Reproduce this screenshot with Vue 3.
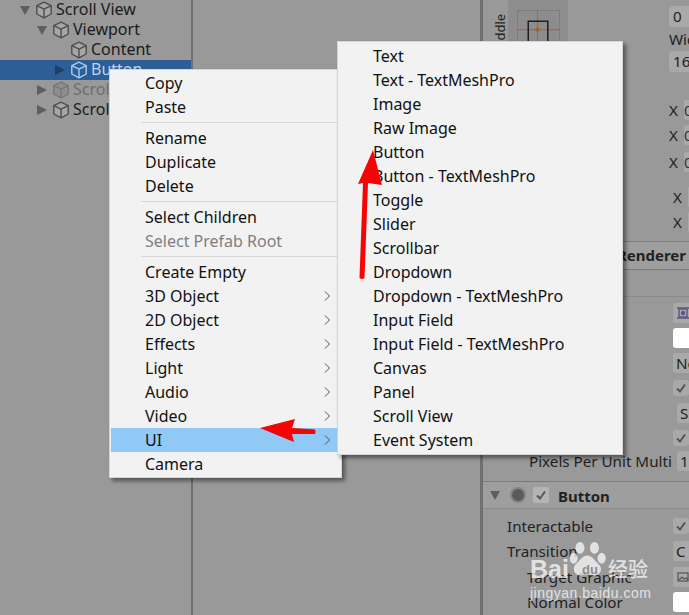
<script setup>
const tree = [
  { name: 'Scroll View', indent: 20, fold: 'open' },
  { name: 'Viewport', indent: 37, fold: 'open' },
  { name: 'Content', indent: 55, fold: '' },
  { name: 'Button', indent: 55, fold: 'closed', selected: true },
  { name: 'Scroll', indent: 37, fold: 'closed', dim: true },
  { name: 'Scroll', indent: 37, fold: 'closed' },
]
const mainMenu = [
  [{ t: 'Copy' }, { t: 'Paste' }],
  [{ t: 'Rename' }, { t: 'Duplicate' }, { t: 'Delete' }],
  [{ t: 'Select Children' }, { t: 'Select Prefab Root', off: true }],
  [
    { t: 'Create Empty' }, { t: '3D Object', sub: true }, { t: '2D Object', sub: true },
    { t: 'Effects', sub: true }, { t: 'Light', sub: true }, { t: 'Audio', sub: true },
    { t: 'Video', sub: true }, { t: 'UI', sub: true, on: true }, { t: 'Camera' },
  ],
]
const uiMenu = ['Text', 'Text - TextMeshPro', 'Image', 'Raw Image', 'Button', 'Button - TextMeshPro', 'Toggle', 'Slider', 'Scrollbar', 'Dropdown', 'Dropdown - TextMeshPro', 'Input Field', 'Input Field - TextMeshPro', 'Canvas', 'Panel', 'Scroll View', 'Event System']
</script>

<template>
  <div class="screen">
    <aside class="hierarchy">
      <div v-for="(n, i) in tree" :key="i" class="node" :class="{ selected: n.selected, dim: n.dim }" :style="{ paddingLeft: n.indent + 'px' }">
        <span class="fold" :class="n.fold"></span>
        <svg class="cube" viewBox="0 0 18 18" stroke-width="1.4" stroke-linejoin="round">
          <path class="face" d="M9 1.2 16.2 4.6V13L9 16.8 1.800 13V4.600Z" />
          <path fill="none" d="M1.800 4.600 9 8.200 16.200 4.600M9 8.200V16.800" />
        </svg>
        <span class="label">{{ n.name }}</span>
      </div>
    </aside>
    <main class="scene"></main>
    <section class="inspector">
      <div class="anchor-row">
        <div class="anchor-box">
          <span class="anchor-label">middle</span>
          <svg class="anchor" viewBox="0 0 44 44" fill="none">
            <rect x="0.500" y="0.500" width="43" height="43" stroke="#7d7d7d" />
            <path d="M0 20H44M21 0V44" stroke="#b5614f" stroke-width="1.200" />
            <rect x="11.500" y="11.500" width="20" height="30" stroke="#1c1c1c" stroke-width="1.500" />
            <circle cx="21" cy="20" r="2.200" fill="#a5602c" />
          </svg>
        </div>
        <div class="pos-col">
          <div class="field">0</div>
          <div class="cap">Wid</div>
          <div class="field">16</div>
        </div>
      </div>
      <div class="xs">
        <div class="x-row"><span>X</span><i class="stub">0</i></div>
        <div class="x-row"><span>X</span><i class="stub">0</i></div>
        <div class="x-row x3"><span>X</span><i class="stub">0</i></div>
      </div>
      <div class="xs second">
        <div class="x-row"><span>X</span><i class="stub"></i></div>
        <div class="x-row"><span>X</span><i class="stub"></i></div>
      </div>
      <div class="comp-head"><b>Renderer</b></div>
      <div class="blank-row"></div>
      <div class="stack">
        <div class="ctl square h20">
          <svg viewBox="0 0 14 14" fill="none" stroke="#5d5480" stroke-width="1.400"><rect x="3" y="3" width="8" height="8" /><path d="M1 2H13M1 12H13" /><circle cx="7" cy="7" r="1.500" fill="#5d5480" /></svg>
        </div>
        <div class="ctl white h20 m5"></div>
        <div class="ctl h20 txt m5">Ne</div>
        <div class="check m7">
          <svg viewBox="0 0 16 16" fill="none" stroke="#555" stroke-width="2"><path d="M4 8.500 7 11.500 12 4.500" /></svg>
        </div>
        <div class="ctl h20 txt inset m7">S</div>
        <div class="check m7">
          <svg viewBox="0 0 16 16" fill="none" stroke="#555" stroke-width="2"><path d="M4 8.500 7 11.500 12 4.500" /></svg>
        </div>
      </div>
      <div class="prop ppu"><span>Pixels Per Unit Multi</span><div class="ctl h20 txt num">1</div></div>
      <div class="btn-head">
        <span class="fold open"></span>
        <span class="dot"></span>
        <span class="head-check">
          <svg viewBox="0 0 16 16" fill="none" stroke="#555" stroke-width="2"><path d="M4 8.500 7 11.500 12 4.500" /></svg>
        </span>
        <b>Button</b>
      </div>
      <div class="prop p1"><span>Interactable</span>
        <div class="check"><svg viewBox="0 0 16 16" fill="none" stroke="#555" stroke-width="2"><path d="M4 8.500 7 11.500 12 4.500" /></svg></div>
      </div>
      <div class="prop"><span>Transition</span><div class="ctl h20 txt">C</div></div>
      <div class="prop sub target"><span>Target Graphic</span>
        <div class="ctl square h20">
          <svg viewBox="0 0 14 14" fill="none" stroke="#555" stroke-width="1.200"><rect x="2" y="3" width="10" height="8" /><path d="M3 10 6 7l2 2 2-1 2 2" /></svg>
        </div>
      </div>
      <div class="prop sub"><span>Normal Color</span><div class="ctl white h20"></div></div>
    </section>

    <div class="menu main-menu">
      <div v-for="(g, gi) in mainMenu" :key="gi" class="group">
        <div v-for="it in g" :key="it.t" class="item" :class="{ off: it.off, on: it.on }">
          <span>{{ it.t }}</span>
          <svg v-if="it.sub" class="chev" viewBox="0 0 6 10" fill="none" stroke="#555" stroke-width="1"><path d="M1 .5 5.500 5 1 9.500" /></svg>
        </div>
      </div>
    </div>
    <div class="menu ui-menu">
      <div v-for="t in uiMenu" :key="t" class="item"><span>{{ t }}</span></div>
    </div>

    <svg class="arrows" viewBox="0 0 689 615">
      <path fill="#f40404" d="M373 150 382 185 368 183 364.500 278Q362 280 359.500 278L363 183 358 184Z" />
      <path fill="#f40404" d="M260 428 295 419 292 428 315 429.500Q316 432 315 434L292 434 294 442Z" />
    </svg>

    <div class="watermark">
      <svg class="paw" viewBox="0 0 42 42" fill="#fff">
        <ellipse cx="11" cy="6.500" rx="5" ry="6.500" />
        <ellipse cx="27" cy="6.500" rx="5" ry="6.500" />
        <ellipse cx="4" cy="18" rx="4.500" ry="6" />
        <ellipse cx="35" cy="18" rx="4.500" ry="6" />
        <path d="M19 15c6 0 8 6 13 10 5 5 1 13-6 12-3-1-5-1-7-1s-5 1-8 1c-6 0-9-7-5-12 5-4 7-10 13-10Z" />
      </svg>
      <span class="bai">Bai</span><span class="du">du</span><span class="jy">经验</span>
      <span class="url">jingyan.baidu.com</span>
    </div>
  </div>
</template>

<style scoped>
.screen {
  position: relative;
  display: flex;
  width: 689px;
  height: 615px;
  overflow: hidden;
  background: #999;
  color: #1b1b1b;
  font-family: "Noto Sans", "Open Sans", sans-serif;
}
.hierarchy {
  width: 191px;
  flex: none;
  border-right: 2px solid #6f6f6f;
}
.node {
  display: flex;
  align-items: center;
  height: 20px;
  font-size: 16px;
  line-height: 20px;
  color: #1b1b1b;
  stroke: #4d4d4d;
}
.node .label { position: relative; top: -1px; stroke: none; }
.node.selected { background: #2d5e96; color: #b9d4ee; stroke: #a9cdee; }
.node.dim { color: #6e6e6e; stroke: #777; }
.fold { width: 15px; height: 0; flex: none; }
.fold.open { width: 0; margin-right: 5px; border-left: 5px solid transparent; border-right: 5px solid transparent; border-top: 9px solid #5e5e5e; }
.fold.closed { width: 0; margin-right: 5px; border-top: 5px solid transparent; border-bottom: 5px solid transparent; border-left: 10px solid #5e5e5e; }
.selected .fold.closed { border-left-color: #1f3e64; }
.cube { width: 18px; height: 18px; margin-right: 3px; flex: none; }
.face { fill: #a6a6a6; }
.selected .face { fill: #2d5e96; }
.dim .face { fill: #8f8f8f; }
.scene { flex: 1; }
.inspector {
  width: 209px;
  flex: none;
  box-sizing: border-box;
  border-left: 3px solid #707070;
  font-size: 15.200px;
  color: #222;
  display: flex;
  flex-direction: column;
}
.anchor-row { display: flex; height: 97px; padding-left: 25px; justify-content: space-between; }
.anchor-box { position: relative; width: 60px; height: 60px; background: #8d8d8d; flex: none; }
.anchor-label { position: absolute; right: 47px; top: 27px; font-size: 13px; line-height: 16px; transform: rotate(-90deg); }
.anchor { position: absolute; left: 9px; top: 10px; width: 43px; height: 43px; }
.pos-col { padding-top: 6px; width: 20px; flex: none; }
.field { height: 21px; line-height: 21px; padding-left: 4px; background: #a9a9a9; border-radius: 3px 0 0 3px; font-size: 15.200px; }
.cap { height: 24px; line-height: 24px; white-space: nowrap; overflow: hidden; }
.xs { padding-left: 186px; }
.xs.second { padding-left: 190px; margin-top: 10px; }
.x-row { display: flex; align-items: center; height: 25px; gap: 5px; }
.x-row span { width: 10px; flex: none; }
.x3 { margin-top: 2px; }
.stub { width: 5px; height: 20px; font-style: normal; background: #a9a9a9; border-radius: 3px 0 0 3px; line-height: 20px; color: #333; overflow: hidden; }
.comp-head { display: flex; justify-content: flex-end; height: 27px; margin-top: 7px; padding-right: 3px; border-top: 1px solid #7a7a7a; border-bottom: 1px solid #7a7a7a; background: #9e9e9e; font-size: 15px; line-height: 27px; }
.blank-row { height: 26px; border-bottom: 1px solid #8a8a8a; }
.stack { padding-left: 190px; padding-top: 6px; display: flex; flex-direction: column; align-items: flex-start; }
.ctl { flex: none; width: 16px; background: #a9a9a9; border-radius: 3px 0 0 3px; box-sizing: border-box; }
.square { display: flex; align-items: center; padding-left: 3px; overflow: hidden; }
.square svg { width: 14px; height: 14px; flex: none; }
.h20 { height: 20px; }
.m5 { margin-top: 5px; }
.m7 { margin-top: 7px; }
.white { background: #fff; }
.txt { line-height: 20px; padding-left: 3px; overflow: hidden; white-space: nowrap; }
.inset { margin-left: 4px; }
.check { width: 16px; height: 16px; flex: none; background: #a9a9a9; border-radius: 3px; }
.check svg, .head-check svg { display: block; width: 16px; height: 16px; }
.prop { display: grid; grid-template-columns: 166px 20px; align-items: center; height: 25px; padding-left: 24px; white-space: nowrap; }
.prop.ppu { grid-template-columns: 148px 12px; padding-left: 46px; margin-top: 5px; height: 20px; }
.btn-head { display: flex; align-items: center; height: 26px; margin-top: 10px; border-top: 1px solid #7a7a7a; border-bottom: 1px solid #8a8a8a; background: #9e9e9e; padding-left: 7px; }
.dot { width: 12px; height: 12px; border-radius: 50%; background: #5a5a5a; box-shadow: 0 0 0 2px #858585; margin: 0 9px 0 7px; flex: none; }
.head-check { width: 16px; height: 16px; background: #b4b4b4; border-radius: 2px; flex: none; }
.btn-head b { margin-left: 9px; font-size: 15px; position: relative; top: 1px; }
.p1 { margin-top: 4px; }
.prop.sub { padding-left: 44px; grid-template-columns: 146px 20px; }
.prop.target { margin-top: 1px; }
.menu {
  position: absolute;
  background: #f2f2f2;
  border: 1px solid #d5d5d5;
  box-sizing: border-box;
  box-shadow: 3px 3px 4px rgba(0, 0, 0, 0.45);
  font-size: 16px;
  color: #111;
}
.main-menu { left: 109px; top: 69px; width: 233px; height: 409px; padding: 1px 1px 0; }
.ui-menu { left: 337px; top: 41px; width: 286px; height: 414px; padding: 2px 1px 0; }
.group + .group { margin-top: 3px; padding-top: 4px; position: relative; }
.group + .group::before { content: ""; position: absolute; left: 30px; right: 0; top: 0; border-top: 1px solid #d7d7d7; }
.item { position: relative; height: 24px; line-height: 24px; padding-left: 34px; white-space: nowrap; }
.off { color: #7f7f7f; }
.on { background: #90c8f6; }
.chev { position: absolute; right: 10px; top: 7px; width: 6px; height: 10px; }
.arrows { position: absolute; left: 0; top: 0; width: 689px; height: 615px; pointer-events: none; }
.watermark { position: absolute; left: 528px; top: 540px; width: 145px; height: 72px; color: #fff; opacity: 0.72; pointer-events: none; }
.paw { position: absolute; left: 42px; top: 2px; width: 38px; height: 38px; }
.bai { position: absolute; left: 2px; top: 14px; font: 700 25px/30px "Liberation Sans", sans-serif; }
.du { position: absolute; left: 54px; top: 22px; font: 700 13px/16px "Liberation Sans", sans-serif; color: #8a8a8a; }
.jy { position: absolute; left: 80px; top: 17px; font: 500 20px/24px "Noto Sans CJK SC", sans-serif; }
.url { position: absolute; left: 2px; top: 44px; font: 14px/18px "Liberation Sans", sans-serif; letter-spacing: 0.500px; }
</style>
